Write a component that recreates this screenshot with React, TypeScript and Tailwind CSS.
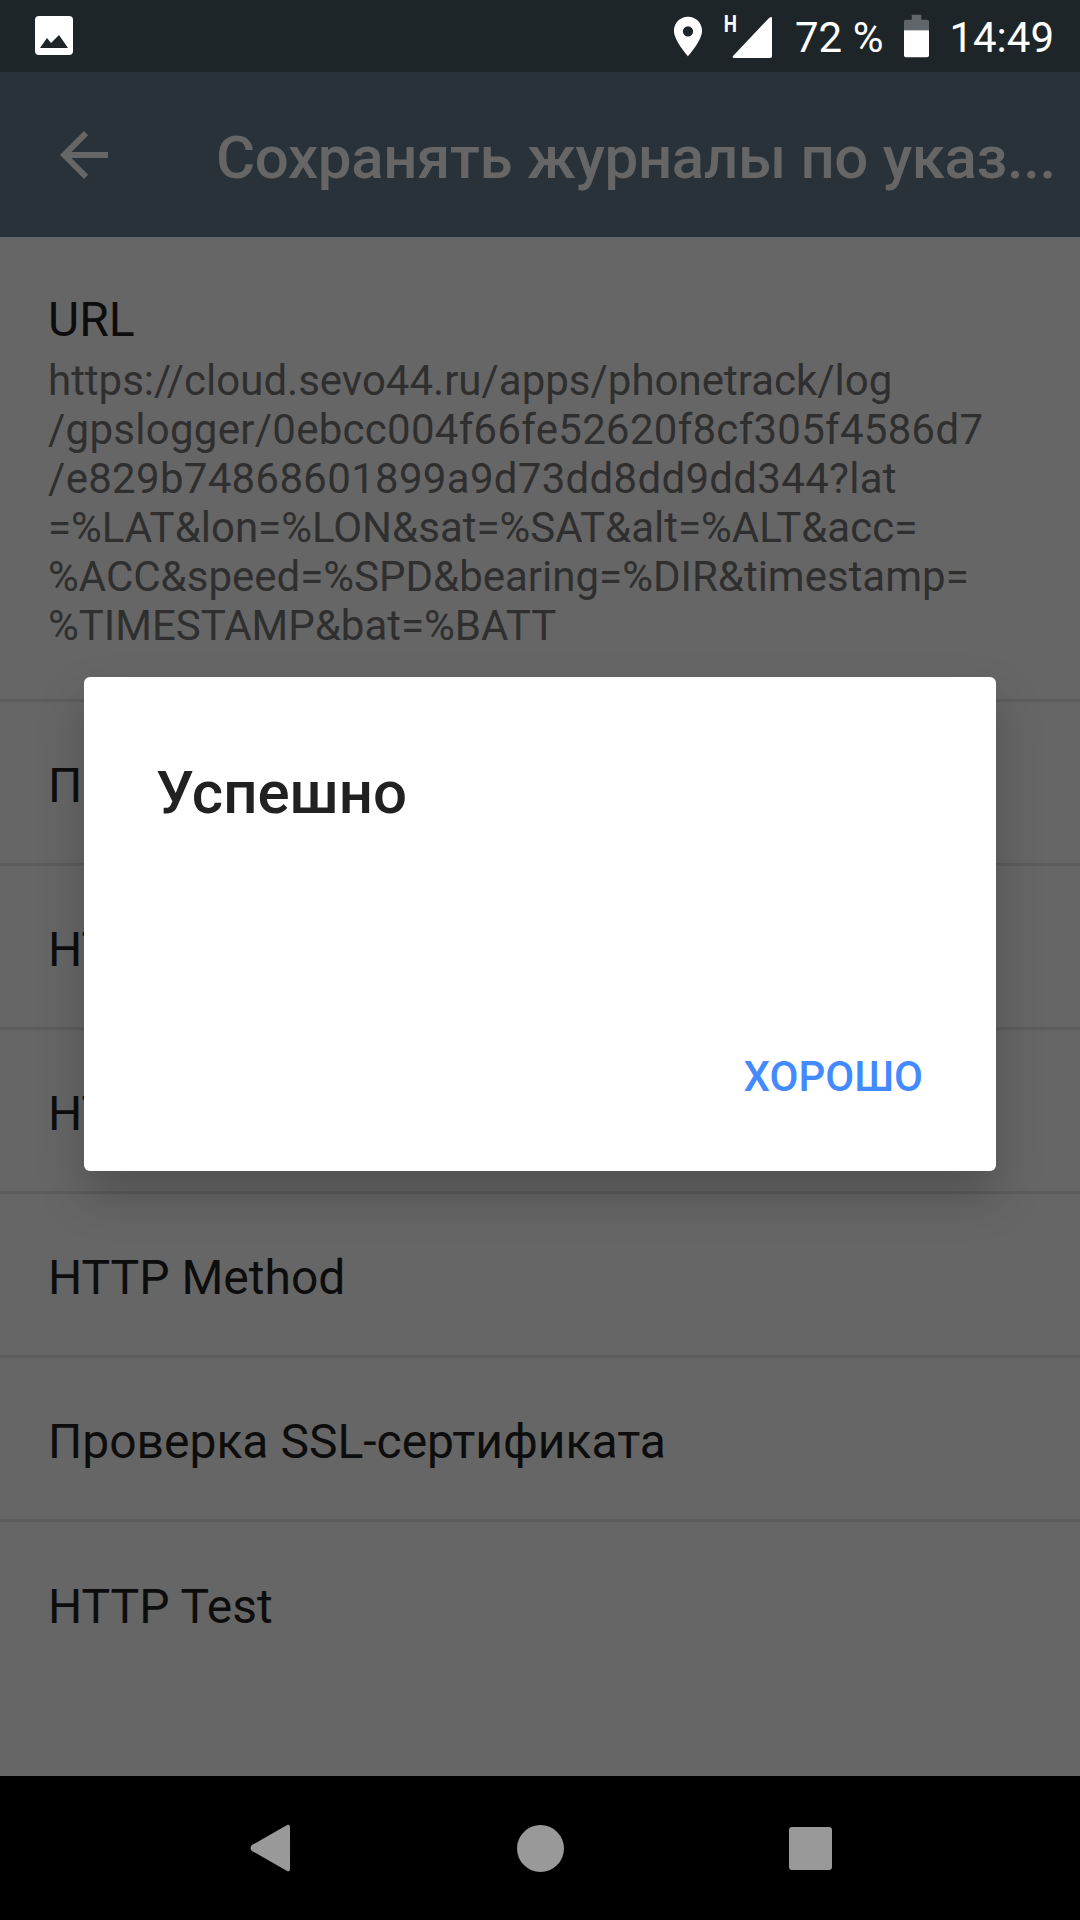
const ROWS = ["Пароль", "HTTP Body", "HTTP Headers", "HTTP Method", "Проверка SSL-сертификата", "HTTP Test"];

// digit-heavy lines run a little wider in the reference
const URL_LINES = [
  { text: "https://cloud.sevo44.ru/apps/phonetrack/log", cls: "" },
  { text: "/gpslogger/0ebcc004f66fe52620f8cf305f4586d7", cls: "tracking-[0.27px]" },
  { text: "/e829b74868601899a9d73dd8dd9dd344?lat", cls: "tracking-[0.3px]" },
  { text: "=%LAT&lon=%LON&sat=%SAT&alt=%ALT&acc=", cls: "" },
  { text: "%ACC&speed=%SPD&bearing=%DIR&timestamp=", cls: "" },
  { text: "%TIMESTAMP&bat=%BATT", cls: "" },
];

function StatusBar() {
  return (
    <div className="h-[72px] bg-[#1d2529] flex items-center justify-between pl-[35px] pr-[26px] text-white">
      <svg width="38" height="39" viewBox="0 0 38 39" className="mt-[-1px]">
        <rect x="0" y="0" width="38" height="39" rx="4" fill="#fff" />
        <path d="M5 32 L12 22 L16 27 L24 19 L33 32 Z" fill="#1d2529" />
      </svg>
      <div className="flex items-center">
        <svg width="30" height="43" viewBox="0 0 32 44" className="mr-[22px] mt-[1px]">
          <path fillRule="evenodd" d="M16 1 C7 1 1 8 1 16 C1 26 16 43 16 43 C16 43 31 26 31 16 C31 8 25 1 16 1 Z M16 11 A5.5 5.5 0 1 1 16 22 A5.5 5.5 0 0 1 16 11 Z" fill="#fff" />
        </svg>
        <div className="relative w-[47px] h-[44px] mr-[23px]">
          <span className="absolute left-[-3px] top-[-4px] text-[24px] leading-[28px] font-bold scale-x-[0.78]">H</span>
          <svg width="40" height="41" viewBox="0 0 40 41" className="absolute left-[7px] top-[3px]">
            <path d="M40 1 V39 Q40 41 38 41 H2 Q0 41 1 39 L37 1 Q40 -1 40 1 Z" fill="#fff" />
          </svg>
        </div>
        <span className="text-[42px] leading-[48px] mt-[3px] mr-[21px] tabular-nums">72 %</span>
        <svg width="25" height="44" viewBox="0 0 26 44" className="mr-[20px]">
          <path d="M8 0 H18 V5 H24 Q26 5 26 7 V16 H0 V7 Q0 5 2 5 H8 Z" fill="#5f6568" />
          <path d="M0 16 H26 V42 Q26 44 24 44 H2 Q0 44 0 42 Z" fill="#fff" />
        </svg>
        <span className="text-[42px] leading-[48px] mt-[3px] tabular-nums">14:49</span>
      </div>
    </div>
  );
}

function Toolbar() {
  return (
    <div className="h-[165px] bg-[#283238] flex items-center text-[#666666]">
      <svg width="48" height="48" viewBox="0 0 48 48" className="ml-[60px] mr-[108px] shrink-0">
        <path d="M48 21 H11.5 L28.2 4.2 L24 0 L0 24 L24 48 L28.2 43.8 L11.5 27 H48 Z" fill="#666666" />
      </svg>
      <div className="pt-[6px] text-[60px] leading-[72px] font-medium whitespace-nowrap tracking-[-0.33px]">Сохранять журналы по указ...</div>
    </div>
  );
}

function Row({ title }: { title: string }) {
  return (
    <div className="h-[164px] border-b-[3px] last:border-b-0 border-[#5c5c5c] pl-[48px] pt-[6px] flex items-center">
      <span className="text-[48px] leading-[56px] text-[#0d0d0d]">{title}</span>
    </div>
  );
}

export default function App() {
  return (
    <div className="relative w-[1080px] h-[1920px] overflow-hidden bg-[#666666] font-['Roboto',sans-serif]">
      <StatusBar />
      <Toolbar />
      <div className="h-[1539px]">
        <div className="h-[465px] border-b-[3px] border-[#5c5c5c] pl-[48px] pt-[55px]">
          <div className="text-[48px] leading-[56px] text-[#0d0d0d]">URL</div>
          <div className="text-[42px] leading-[49px] text-[#2f2f2f] mt-[8px] whitespace-nowrap tabular-nums">
            {URL_LINES.map((line) => <div key={line.text} className={line.cls}>{line.text}</div>)}
          </div>
        </div>
        {ROWS.map((title) => <Row key={title} title={title} />)}
      </div>
      <div className="h-[144px] bg-black flex items-center">
        <svg width="41" height="48" viewBox="0 0 42 48" className="ml-[250px]">
          <path d="M38 0.5 Q41 -1 41 3 V45 Q41 49 38 47.5 L2 27 Q-1 24 2 21 Z" fill="#999999" />
        </svg>
        <div className="w-[47px] h-[47px] rounded-full bg-[#999999] ml-[226px]"></div>
        <div className="w-[43px] h-[43px] rounded-[3px] bg-[#999999] ml-[225px]"></div>
      </div>
      <div className="absolute left-[84px] top-[677px] w-[912px] h-[494px] bg-white rounded-[6px] shadow-[0_24px_48px_rgba(0,0,0,0.22)] flex flex-col">
        <div className="pl-[72px] pt-[80px] text-[60px] leading-[72px] font-medium text-[#212121]">Успешно</div>
        <div className="mt-auto self-end mr-[73px] mb-[69px] text-[42px] leading-[50px] font-medium text-[#448aff]">ХОРОШО</div>
      </div>
    </div>
  );
}
